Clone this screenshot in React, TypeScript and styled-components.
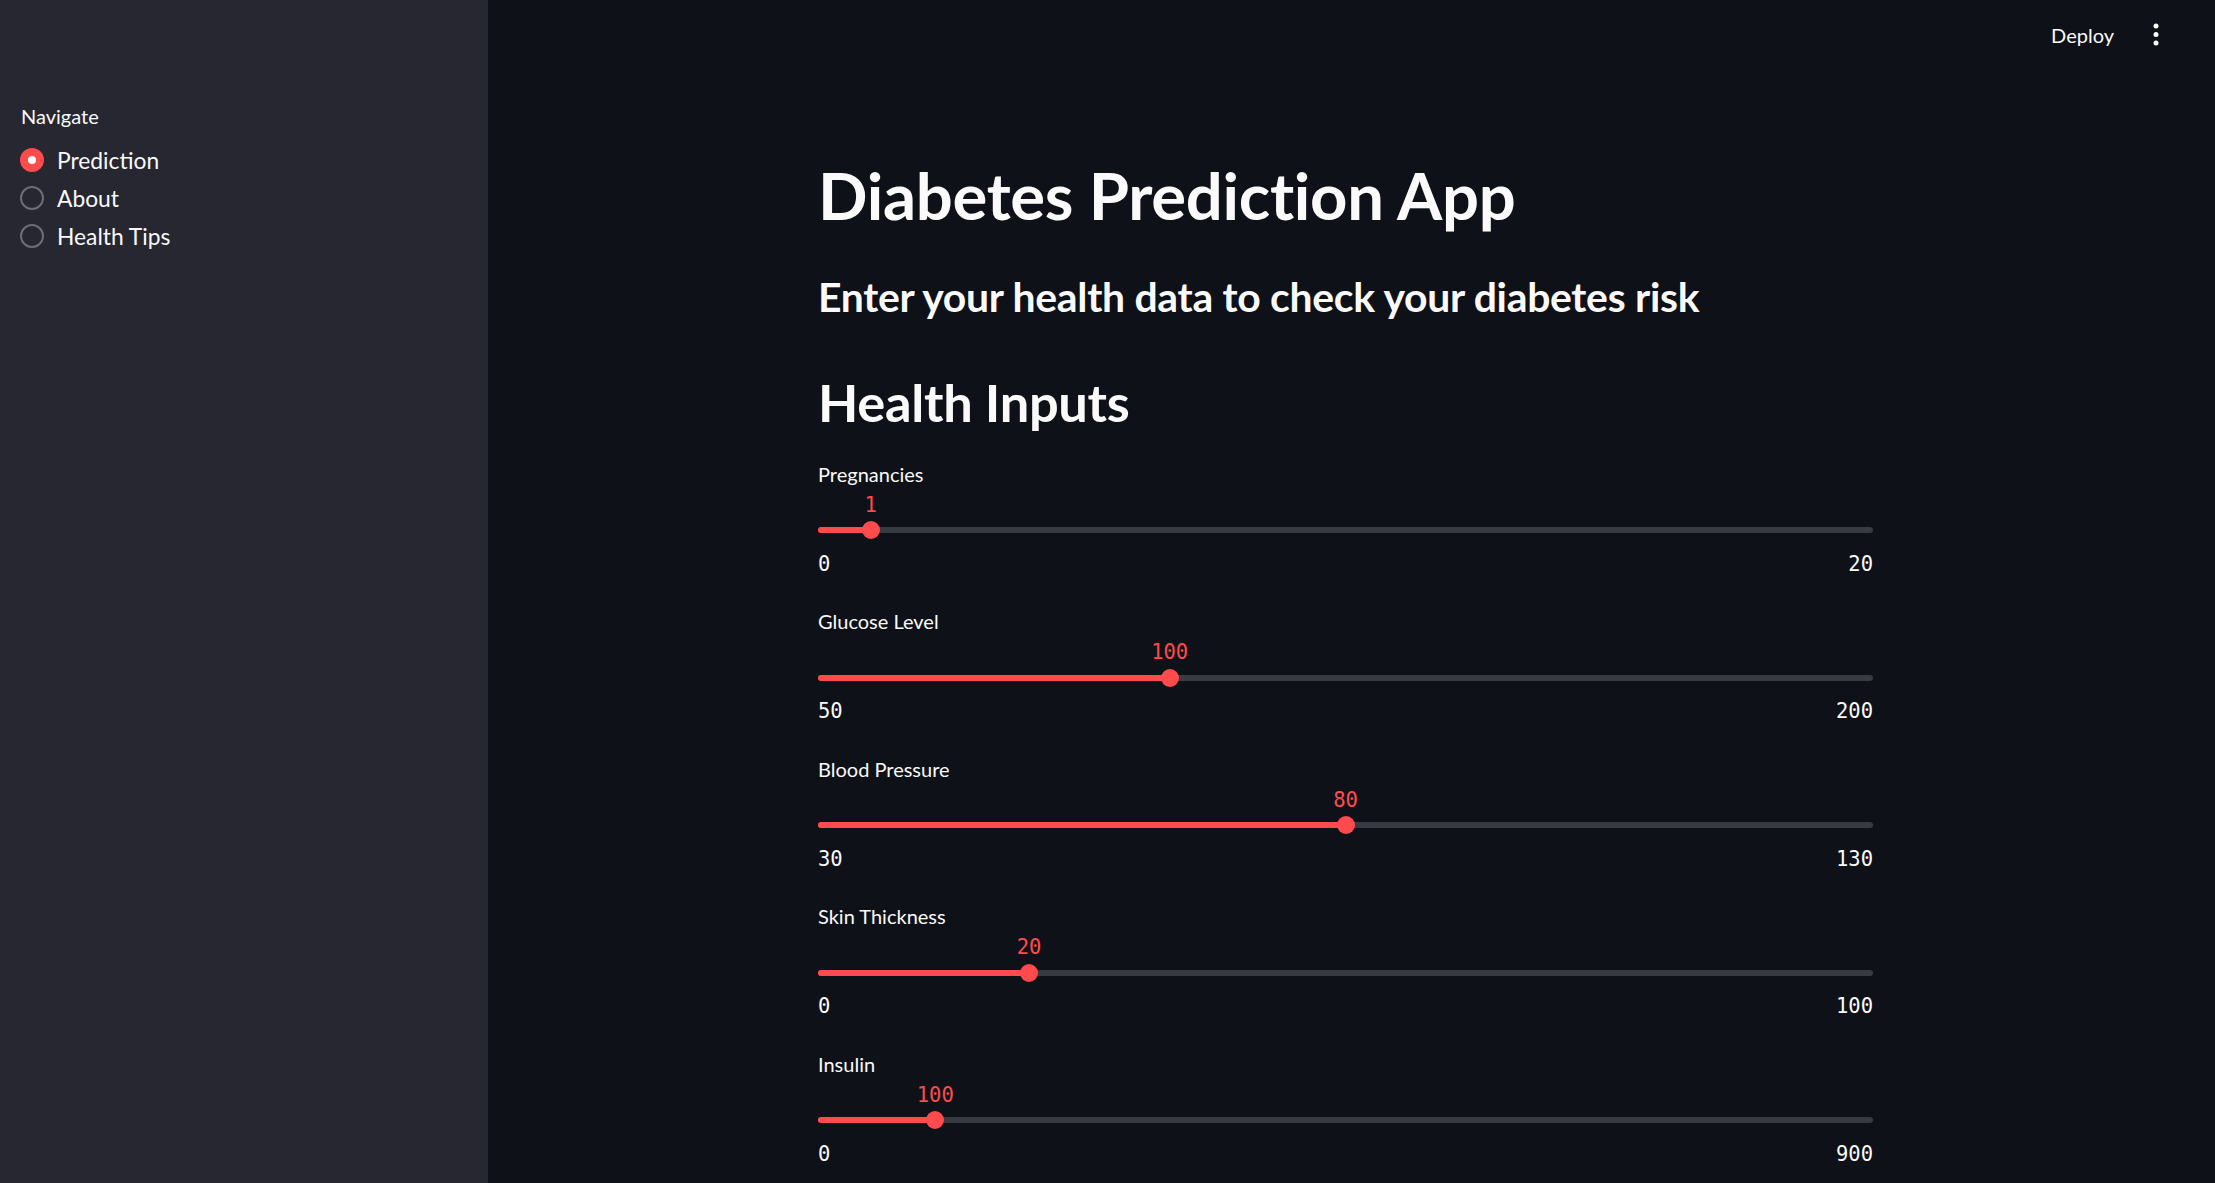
import React from "react";
import styled, { createGlobalStyle } from "styled-components";

const Global = createGlobalStyle`
  html, body { margin: 0; padding: 0; background: #0e1117; }
  body { font-family: Lato, "Noto Sans", sans-serif; color: #fafafa; overflow: hidden; }
  * { box-sizing: border-box; }
`;

const Shell = styled.div`
  display: flex;
  width: 100vw;
  height: 100vh;
  overflow: hidden;
`;

const Sidebar = styled.aside`
  width: 488px;
  flex: none;
  background: #262730;
  padding: 100.5px 20px 0 20px;
  display: flex;
  flex-direction: column;
`;

const NavLabel = styled.div`
  font-size: 20px;
  line-height: 31px;
  height: 31px;
  color: #fafafa;
  padding-left: 1px;
  margin-bottom: 9.3px;
`;

const RadioRow = styled.div`
  display: flex;
  align-items: center;
  gap: 13px;
  height: 38.2px;
  font-size: 22.8px;
  color: #fafafa;
`;

const RadioCircle = styled.span<{ $on: boolean }>`
  width: 24px;
  height: 24px;
  border-radius: 50%;
  flex: none;
  display: flex;
  align-items: center;
  justify-content: center;
  background: ${(p) => (p.$on ? "#ff4b4b" : "transparent")};
  border: ${(p) => (p.$on ? "none" : "2px solid #6d6e74")};
  &::after {
    content: "";
    display: ${(p) => (p.$on ? "block" : "none")};
    width: 8px;
    height: 8px;
    border-radius: 50%;
    background: #fafafa;
  }
`;

const Main = styled.main`
  flex: 1;
  display: flex;
  flex-direction: column;
  min-width: 0;
`;

const Header = styled.header`
  height: 70px;
  flex: none;
  display: flex;
  align-items: center;
  justify-content: flex-end;
  gap: 39px;
  padding-right: 56px;
`;

const DeployButton = styled.span`
  font-size: 20px;
  color: #fafafa;
`;

const Body = styled.div`
  padding-right: 12px;
`;

const Column = styled.div`
  width: 1055px;
  margin: 0 auto;
  display: flex;
  flex-direction: column;
`;

const Title = styled.h1`
  margin: 85.5px 0 0 0;
  font-size: 65.2px;
  font-weight: 700;
  line-height: 79px;
  height: 79px;
  letter-spacing: -0.3px;
`;

const Subtitle = styled.h3`
  margin: 37.5px 0 0 0;
  font-size: 40.9px;
  font-weight: 700;
  line-height: 50px;
  height: 50px;
  letter-spacing: -0.3px;
`;

const SectionTitle = styled.h2`
  margin: 46.5px 0 0 0;
  font-size: 52.4px;
  font-weight: 700;
  line-height: 65px;
  height: 65px;
  letter-spacing: -0.3px;
`;

const Sliders = styled.div`
  margin-top: 28px;
  display: flex;
  flex-direction: column;
`;

const SliderBlock = styled.div`
  height: 147.6px;
  flex: none;
  display: flex;
  flex-direction: column;
`;

const SliderLabel = styled.div`
  font-size: 20px;
  line-height: 25px;
  height: 31px;
`;

const TrackArea = styled.div`
  height: 56px;
  padding-top: 34.5px;
`;

const Rail = styled.div`
  position: relative;
  height: 6px;
  border-radius: 3px;
  background: #393b43;
`;

const Fill = styled.div`
  position: absolute;
  left: 0;
  top: 0;
  height: 6px;
  border-radius: 3px;
  background: #ff4b4b;
`;

const Thumb = styled.div`
  position: absolute;
  top: 50%;
  width: 18px;
  height: 18px;
  border-radius: 50%;
  background: #ff4b4b;
  transform: translate(-50%, -50%);
`;

const ValueBubble = styled.div`
  position: absolute;
  top: -36.5px;
  transform: translateX(-50%);
  font-family: "DejaVu Sans Mono", "Liberation Mono", monospace;
  font-size: 20.5px;
  line-height: 29px;
  color: #ff4b4b;
  white-space: nowrap;
`;

const TickRow = styled.div`
  display: flex;
  justify-content: space-between;
  height: 31px;
  line-height: 31px;
  font-family: "DejaVu Sans Mono", "Liberation Mono", monospace;
  font-size: 20.5px;
  color: #fafafa;
`;

type SliderSpec = { label: string; min: number; max: number; value: number };

const sliders: SliderSpec[] = [
  { label: "Pregnancies", min: 0, max: 20, value: 1 },
  { label: "Glucose Level", min: 50, max: 200, value: 100 },
  { label: "Blood Pressure", min: 30, max: 130, value: 80 },
  { label: "Skin Thickness", min: 0, max: 100, value: 20 },
  { label: "Insulin", min: 0, max: 900, value: 100 },
];

function Slider({ label, min, max, value }: SliderSpec) {
  const pct = ((value - min) / (max - min)) * 100;
  return (
    <SliderBlock>
      <SliderLabel>{label}</SliderLabel>
      <TrackArea>
        <Rail>
          <Fill style={{ width: `${pct}%` }} />
          <Thumb style={{ left: `${pct}%` }} />
          <ValueBubble style={{ left: `${pct}%` }}>{value}</ValueBubble>
        </Rail>
      </TrackArea>
      <TickRow>
        <span>{min}</span>
        <span>{max}</span>
      </TickRow>
    </SliderBlock>
  );
}

const navItems = ["Prediction", "About", "Health Tips"];

export default function App() {
  return (
    <>
      <Global />
      <Shell>
        <Sidebar>
          <NavLabel>Navigate</NavLabel>
          {navItems.map((n, i) => (
            <RadioRow key={n}>
              <RadioCircle $on={i === 0} />
              <span>{n}</span>
            </RadioRow>
          ))}
        </Sidebar>
        <Main>
          <Header>
            <DeployButton>Deploy</DeployButton>
            <svg width="6" height="24" viewBox="0 0 6 24">
              <circle cx="3" cy="3" r="2.5" fill="#fafafa" />
              <circle cx="3" cy="11.5" r="2.5" fill="#fafafa" />
              <circle cx="3" cy="20" r="2.5" fill="#fafafa" />
            </svg>
          </Header>
          <Body>
            <Column>
              <Title>Diabetes Prediction App</Title>
              <Subtitle>Enter your health data to check your diabetes risk</Subtitle>
              <SectionTitle>Health Inputs</SectionTitle>
              <Sliders>
                {sliders.map((s) => (
                  <Slider key={s.label} {...s} />
                ))}
              </Sliders>
            </Column>
          </Body>
        </Main>
      </Shell>
    </>
  );
}
